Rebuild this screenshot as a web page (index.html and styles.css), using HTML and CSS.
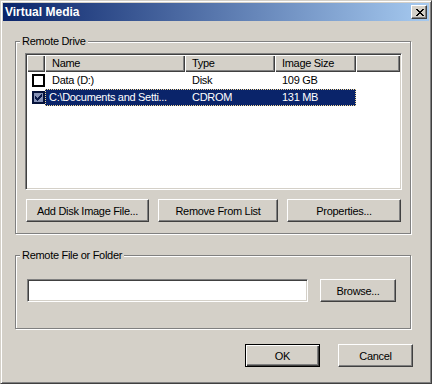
FILE: index.html
```html
<!DOCTYPE html>
<html>
<head>
<meta charset="utf-8">
<link rel="stylesheet" href="styles.css">
</head>
<body>
<div class="window">
  <div class="titlebar">
    <span class="title">Virtual Media</span>
    <div class="close">
      <svg width="8" height="7" viewBox="0 0 8 7" shape-rendering="crispEdges"><path fill="#000" d="M0 0h2v1H0z M6 0h2v1H6z M1 1h2v1H1z M5 1h2v1H5z M2 2h4v1H2z M3 3h2v1H3z M2 4h4v1H2z M1 5h2v1H1z M5 5h2v1H5z M0 6h2v1H0z M6 6h2v1H6z"/></svg>
    </div>
  </div>
  <div class="content">
    <div class="group g1">
      <span class="legend">Remote Drive</span>
      <div class="list">
        <div class="lv-head">
          <div class="hcell"></div>
          <div class="hcell">Name</div>
          <div class="hcell">Type</div>
          <div class="hcell">Image Size</div>
          <div class="hcell"></div>
        </div>
        <div class="lv-row">
          <div class="chk-cell"><span class="cb"></span></div>
          <div class="cells">
            <div class="c-name">Data (D:)</div>
            <div class="c-type">Disk</div>
            <div class="c-size">109 GB</div>
          </div>
        </div>
        <div class="lv-row">
          <div class="chk-cell"><span class="cb checked">
            <svg width="7" height="7" viewBox="0 0 7 7" shape-rendering="crispEdges"><path fill="#0a1a4a" d="M6 0h1v3H6z M5 1h1v3H5z M4 2h1v3H4z M3 3h1v3H3z M2 4h1v3H2z M1 3h1v3H1z M0 2h1v3H0z"/></svg>
          </span></div>
          <div class="cells sel">
            <div class="c-name">C:\Documents and Setti...</div>
            <div class="c-type">CDROM</div>
            <div class="c-size">131 MB</div>
          </div>
        </div>
      </div>
      <div class="btnrow">
        <button class="btn w-add">Add Disk Image File...</button>
        <button class="btn w-rem">Remove From List</button>
        <button class="btn w-prop">Properties...</button>
      </div>
    </div>
    <div class="group g2">
      <span class="legend">Remote File or Folder</span>
      <div class="filerow">
        <div class="field"></div>
        <button class="btn w-browse">Browse...</button>
      </div>
    </div>
    <div class="footer">
      <button class="btn default w-ok">OK</button>
      <button class="btn w-ok">Cancel</button>
    </div>
  </div>
</div>
</body>
</html>
```
FILE: styles.css
```css
html, body {
  margin: 0;
  padding: 0;
}
body {
  width: 432px;
  height: 384px;
  overflow: hidden;
  font-family: "Liberation Sans", Arial, sans-serif;
  font-size: 11px;
  letter-spacing: -0.3px;
  color: #000;
}
.window {
  box-sizing: border-box;
  width: 432px;
  height: 384px;
  background: #d4d0c8;
  border: 1px solid;
  border-color: #d4d0c8 #404040 #404040 #d4d0c8;
  box-shadow: inset 1px 1px #fff, inset -1px -1px #808080;
  padding: 2px;
  display: flex;
  flex-direction: column;
}
.titlebar {
  height: 18px;
  flex: none;
  display: flex;
  align-items: center;
  padding-left: 2px;
  background: linear-gradient(to right, #0a246a, #a6caf0);
}
.title {
  flex: 1;
  color: #fff;
  font-weight: bold;
  font-size: 12px;
  letter-spacing: 0;
}
.close {
  box-sizing: border-box;
  width: 16px;
  height: 14px;
  margin-right: 2px;
  background: #d4d0c8;
  border: 1px solid;
  border-color: #fff #404040 #404040 #fff;
  box-shadow: inset -1px -1px #808080;
  display: flex;
  align-items: center;
  justify-content: center;
  padding-left: 1px;
}
.close svg {
  display: block;
}
.content {
  flex: 1;
}
.group {
  position: relative;
  box-sizing: border-box;
  width: 396px;
  margin-left: 12px;
  border: 1px solid #808080;
  box-shadow: inset 1px 1px #fff, 1px 1px #fff;
}
.legend {
  position: absolute;
  top: -7px;
  left: 4px;
  padding: 0 2px;
  line-height: 13px;
  background: #d4d0c8;
}
.g1 {
  margin-top: 20px;
  height: 193px;
  padding: 11px 0 0 9px;
}
.list {
  box-sizing: border-box;
  width: 377px;
  height: 137px;
  background: #fff;
  border: 1px solid;
  border-color: #808080 #fff #fff #808080;
  box-shadow: inset 1px 1px #404040, inset -1px -1px #d4d0c8;
  padding: 1px;
}
.lv-head {
  display: grid;
  grid-template-columns: 18px 140px 90px 81px 1fr;
  height: 17px;
}
.hcell {
  background: #d4d0c8;
  box-shadow: inset 1px 1px #fff, inset -1px -1px #404040, inset -2px -2px #808080;
  padding-left: 7px;
  line-height: 17px;
  white-space: nowrap;
}
.lv-row {
  display: flex;
  height: 17px;
  line-height: 17px;
}
.chk-cell {
  box-sizing: border-box;
  width: 18px;
  padding-left: 5px;
  display: flex;
  align-items: center;
}
.cb {
  box-sizing: border-box;
  width: 13px;
  height: 13px;
  border: 2px solid #000;
  background: #fff;
  display: flex;
  align-items: center;
  justify-content: center;
}
.cb.checked {
  border-color: #05123a;
  background: #8591b5;
}
.cb svg {
  display: block;
}
.cells {
  display: flex;
}
.cells > div {
  box-sizing: border-box;
  padding-left: 7px;
  white-space: nowrap;
  overflow: hidden;
}
.c-name { width: 140px; }
.c-type { width: 90px; }
.c-size { width: 81px; }
.sel {
  background: #0a246a;
  color: #fff;
  outline: 1px dotted #f5db95;
  outline-offset: -1px;
}
.sel .c-name {
  padding-left: 4px;
}
.btnrow {
  display: flex;
  gap: 9px;
  margin-top: 9px;
  padding-left: 1px;
}
.btn {
  box-sizing: border-box;
  height: 23px;
  margin: 0;
  padding: 0;
  font: inherit;
  letter-spacing: inherit;
  color: #000;
  background: #d4d0c8;
  border: 1px solid;
  border-color: #fff #404040 #404040 #fff;
  box-shadow: inset -1px -1px #808080;
  border-radius: 0;
}
.btn.default {
  border-color: #000;
  box-shadow: inset 1px 1px #fff, inset -1px -1px #404040, inset -2px -2px #808080;
}
.w-add { width: 123px; }
.w-rem { width: 120px; }
.w-prop { width: 114px; }
.w-browse { width: 76px; }
.w-ok { width: 75px; }
.g2 {
  margin-top: 21px;
  height: 74px;
  padding: 23px 0 0 11px;
}
.filerow {
  display: flex;
  gap: 12px;
}
.field {
  box-sizing: border-box;
  width: 281px;
  height: 23px;
  background: #fff;
  border: 1px solid;
  border-color: #808080 #fff #fff #808080;
  box-shadow: inset 1px 1px #404040, inset -1px -1px #d4d0c8;
}
.footer {
  display: flex;
  justify-content: flex-end;
  gap: 18px;
  margin-top: 15px;
  padding-right: 16px;
}
```
